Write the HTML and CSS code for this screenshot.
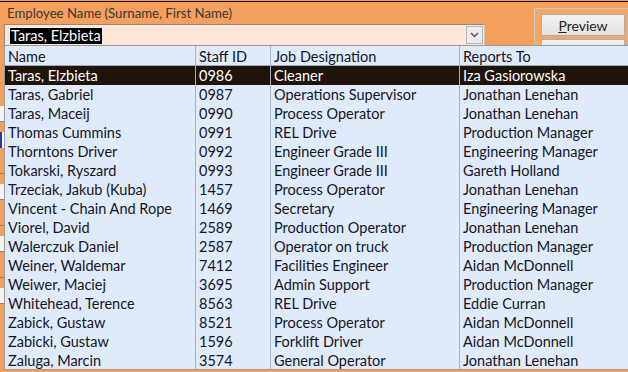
FILE: index.html
```html
<!DOCTYPE html>
<html lang="en">
<head>
    <meta charset="UTF-8">
    <title>Staff Lookup</title>
    <link rel="stylesheet" href="styles.css">
</head>
<body>
    <div class="form">
        <div class="top-row">
            <div class="lookup">
                <label class="lookup-label" for="employee">Employee Name (Surname, First Name)</label>
                <div class="combo">
                    <span class="combo-value"><span class="selected-text">Taras, Elzbieta</span></span>
                    <span class="combo-btn">
                        <svg width="9" height="6" viewBox="0 0 9 6"><path d="M1 1 L4.5 4.5 L8 1" fill="none" stroke="#505050" stroke-width="1.4"/></svg>
                    </span>
                </div>
            </div>
            <div class="actions">
                <button class="btn"><u>P</u>review</button>
                <button class="btn"><u>O</u>pen Link</button>
            </div>
        </div>

        <!-- fields behind the open list -->
        <div class="details">
            <div class="field field-light"></div>
            <div class="field field-blue"></div>
            <div class="field field-orange"></div>
            <div class="field field-light"></div>
            <div class="field field-orange"></div>
            <div class="field field-light"></div>
            <div class="field field-orange"></div>
            <div class="field field-light"></div>
        </div>

        <div class="dropdown">
            <div class="row head"><span>Name</span><span>Staff ID</span><span>Job Designation</span><span>Reports To</span></div>
            <div class="row active"><span>Taras, Elzbieta</span><span>0986</span><span>Cleaner</span><span>Iza Gasiorowska</span></div>
            <div class="row"><span>Taras, Gabriel</span><span>0987</span><span>Operations Supervisor</span><span>Jonathan Lenehan</span></div>
            <div class="row"><span>Taras, Maceij</span><span>0990</span><span>Process Operator</span><span>Jonathan Lenehan</span></div>
            <div class="row"><span>Thomas Cummins</span><span>0991</span><span>REL Drive</span><span>Production Manager</span></div>
            <div class="row"><span>Thorntons Driver</span><span>0992</span><span>Engineer Grade III</span><span>Engineering Manager</span></div>
            <div class="row"><span>Tokarski, Ryszard</span><span>0993</span><span>Engineer Grade III</span><span>Gareth Holland</span></div>
            <div class="row"><span>Trzeciak, Jakub (Kuba)</span><span>1457</span><span>Process Operator</span><span>Jonathan Lenehan</span></div>
            <div class="row"><span>Vincent - Chain And Rope</span><span>1469</span><span>Secretary</span><span>Engineering Manager</span></div>
            <div class="row"><span>Viorel, David</span><span>2589</span><span>Production Operator</span><span>Jonathan Lenehan</span></div>
            <div class="row"><span>Walerczuk Daniel</span><span>2587</span><span>Operator on truck</span><span>Production Manager</span></div>
            <div class="row"><span>Weiner, Waldemar</span><span>7412</span><span>Facilities Engineer</span><span>Aidan McDonnell</span></div>
            <div class="row"><span>Weiwer, Maciej</span><span>3695</span><span>Admin Support</span><span>Production Manager</span></div>
            <div class="row"><span>Whitehead, Terence</span><span>8563</span><span>REL Drive</span><span>Eddie Curran</span></div>
            <div class="row"><span>Zabick, Gustaw</span><span>8521</span><span>Process Operator</span><span>Aidan McDonnell</span></div>
            <div class="row"><span>Zabicki, Gustaw</span><span>1596</span><span>Forklift Driver</span><span>Aidan McDonnell</span></div>
            <div class="row"><span>Zaluga, Marcin</span><span>3574</span><span>General Operator</span><span>Jonathan Lenehan</span></div>
        </div>
    </div>
</body>
</html>
```

FILE: styles.css
```css
* {
    margin: 0;
    padding: 0;
    box-sizing: border-box;
}

body {
    width: 628px;
    height: 372px;
    overflow: hidden;
    background-color: #f59f5c;
    font-family: Lato, 'Open Sans', sans-serif;
    font-size: 14.5px;
}

.form {
    position: relative;
    height: 372px;
    margin-top: 1px;
    border-top: 1px solid #111;
}

.top-row {
    display: flex;
    justify-content: space-between;
}

.lookup {
    padding: 1px 0 0 4px;
}

.lookup-label {
    display: block;
    height: 21px;
    padding-left: 3px;
    color: #383838;
    font-size: 13.2px;
    line-height: 20px;
}

.combo {
    display: flex;
    align-items: center;
    width: 481px;
    height: 21px;
    border: 1px solid #8a8a8a;
    border-right-color: #c8c8c8;
    border-bottom: none;
    background-color: #fde7d8;
}

.combo-value {
    flex: 1;
    padding-left: 5px;
}

.selected-text {
    display: inline-block;
    padding: 0 1px;
    line-height: 16px;
    background-color: #000;
    color: #fff;
}

.combo-btn {
    display: flex;
    align-items: center;
    justify-content: center;
    width: 17px;
    height: 18px;
    margin-right: 1px;
    border: 1px solid #b4b4b4;
    background-color: #ececec;
}

.actions {
    display: flex;
    flex-direction: column;
    gap: 3px;
    width: 94px;
    height: 60px;
    margin-top: 6px;
    padding: 5px 0 0 6px;
    border: 1px solid #c9c9c9;
    border-right: none;
    background-color: #f6a766;
}

.btn {
    width: 84px;
    height: 22px;
    border: 1px solid #adadad;
    background: linear-gradient(#f2f2f2, #e2e2e2);
    color: #222;
    font-family: inherit;
    font-size: 14px;
}

.details {
    display: flex;
    flex-direction: column;
    gap: 10px;
    padding-top: 38px;
}

.field {
    width: 60px;
    height: 16px;
}

.field-light {
    background-color: #f4f4f4;
    border-bottom: 1px solid #888;
}

.field-blue {
    background-color: #ffffff;
    border-left: 2px solid #1f3fa0;
}

.field-orange {
    border-bottom: 1px solid #c07040;
}

.dropdown {
    position: absolute;
    top: 43px;
    left: 4px;
    width: 640px;
    height: 325px;
    overflow: hidden;
    border: 1px solid #9a9a9a;
    background-color: #dfebfb;
    color: #15151f;
}

.row {
    display: grid;
    grid-template-columns: 190px 75px 189px 1fr;
    height: 19px;
    line-height: 20px;
    white-space: nowrap;
}

.row span {
    padding-left: 3px;
    border-left: 1px solid #a8b0bc;
}

.row span:first-child {
    border-left: none;
}

.row.head {
    height: 20px;
    line-height: 21px;
    border-bottom: 1px solid #a0a8b4;
}

.row.active {
    background-color: #1f1409;
    color: #fff;
}
```
